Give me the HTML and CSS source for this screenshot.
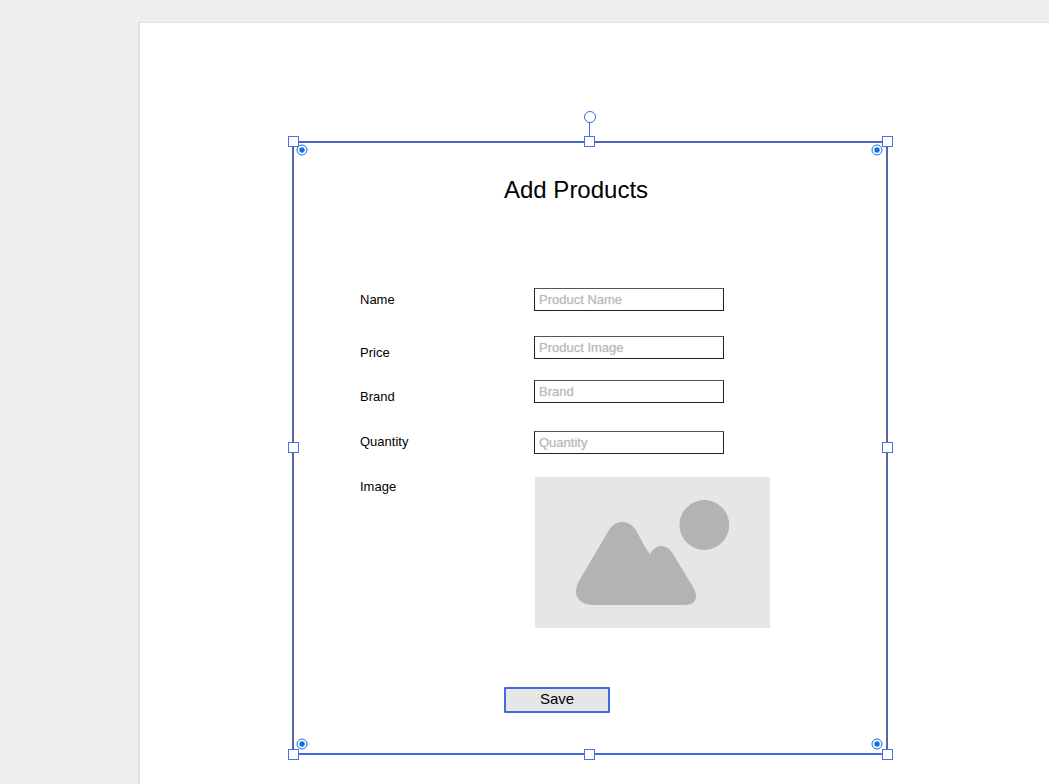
FILE: index.html
```html
<!DOCTYPE html>
<html lang="en">
<head>
<meta charset="utf-8">
<title>Add Products</title>
<link rel="stylesheet" href="styles.css">
</head>
<body>
<main class="page">
  <section class="frame">
    <h1 class="title">Add Products</h1>
    <form class="form">
      <div class="row row-name">
        <label for="name">Name</label>
        <input id="name" type="text" placeholder="Product Name">
      </div>
      <div class="row row-price">
        <label for="price">Price</label>
        <input id="price" type="text" placeholder="Product Image">
      </div>
      <div class="row row-brand">
        <label for="brand">Brand</label>
        <input id="brand" type="text" placeholder="Brand">
      </div>
      <div class="row row-quantity">
        <label for="quantity">Quantity</label>
        <input id="quantity" type="text" placeholder="Quantity">
      </div>
      <div class="row row-image">
        <span class="caption">Image</span>
        <svg class="picture" viewBox="0 0 235 151" role="img" aria-label="Image placeholder">
          <rect width="235" height="151" fill="#e6e6e6"/>
          <circle cx="169.300" cy="48" r="24.900" fill="#b3b3b3"/>
          <path fill="#b3b3b3" d="M74 53C79 46 83 45 87.500 45C93 45 98 48 102 55C106 63 110 70 114.700 77C118 72 122 69 126 69C130 69 134 71 138 77L158 110C160 113 161 116 161 120C161 125 156 128 150 128H58C49 128 41 123 41 115C41 111 42 108 44 104Z"/>
        </svg>
      </div>
      <button class="save" type="button">Save</button>
    </form>
    <i class="handle top left"></i>
    <i class="handle top center"></i>
    <i class="handle top right"></i>
    <i class="handle middle left"></i>
    <i class="handle middle right"></i>
    <i class="handle bottom left"></i>
    <i class="handle bottom center"></i>
    <i class="handle bottom right"></i>
    <i class="rotate"></i>
    <svg class="dot dot-top dot-left" viewBox="0 0 12 12"><circle cx="6" cy="6" r="5"/><circle class="core" cx="6" cy="6" r="2.700"/></svg>
    <svg class="dot dot-top dot-right" viewBox="0 0 12 12"><circle cx="6" cy="6" r="5"/><circle class="core" cx="6" cy="6" r="2.700"/></svg>
    <svg class="dot dot-bottom dot-left" viewBox="0 0 12 12"><circle cx="6" cy="6" r="5"/><circle class="core" cx="6" cy="6" r="2.700"/></svg>
    <svg class="dot dot-bottom dot-right" viewBox="0 0 12 12"><circle cx="6" cy="6" r="5"/><circle class="core" cx="6" cy="6" r="2.700"/></svg>
  </section>
</main>
</body>
</html>
```

FILE: styles.css
```css
* { box-sizing: border-box; }

body {
  display: flex;
  min-height: 100vh;
  margin: 0;
  padding: 22px 0 0 138px;
  background: #eee;
  color: #000;
  font-family: "Liberation Sans", Arial, sans-serif;
  font-size: 13px;
}

.page {
  flex: 1;
  padding: 118px 24px 28px 152px;
  border: solid #e0e0e0;
  border-width: 1px 0 0 2px;
  background: #fff;
}

.frame {
  position: relative;
  max-width: 596px;
  padding: 33px 66px 41px;
  border: 2px solid #5468a8;
  border-top-color: #4a66bc;
  border-bottom-color: #4169e1;
}

.title {
  margin: 0 0 84px;
  padding-left: 144px;
  font-size: 24px;
  font-weight: 400;
  line-height: 28px;
}

.row {
  display: grid;
  grid-template-columns: 174px 1fr;
  align-items: start;
}

.row label,
.caption { line-height: 20px; }

.row-name { height: 48px; }
.row-name label { padding-top: 2px; }
.row-price { height: 44px; }
.row-price label { padding-top: 7px; }
.row-brand { height: 51px; }
.row-brand label { padding-top: 7px; }
.row-quantity { height: 46px; }
.row-quantity label { padding-top: 1px; }

input {
  width: 190px;
  height: 23px;
  padding: 0 4px 1px;
  border: 1px solid #222;
  border-top-color: #555;
  background: #fff;
  font: inherit;
}

input::placeholder {
  color: #bbb;
  opacity: 1;
  text-shadow: 0 0 1px #ccc;
}

.picture {
  display: block;
  width: 235px;
  margin-left: 1px;
}

.save {
  display: block;
  width: 106px;
  height: 26px;
  margin: 59px 0 0 144px;
  padding: 0 0 3px;
  border: 2px solid #4169e1;
  border-radius: 1px;
  background: #e6e6e6;
  color: #000;
  font: inherit;
  font-size: 15px;
}

.form { margin-bottom: -1px; }

.handle {
  position: absolute;
  width: 11px;
  height: 11px;
  border: 1px solid #4a6ee8;
  background: #fff;
}

.top { top: -7px; }
.middle { top: calc(50% - 6px); }
.bottom { bottom: -7px; }
.left { left: -6px; }
.center { left: calc(50% - 6px); }
.right { right: -7px; }

.rotate {
  position: absolute;
  top: -32px;
  left: calc(50% - 6px);
  width: 12px;
  height: 12px;
  border: 1px solid #4169e1;
  border-radius: 50%;
}

.rotate::after {
  content: "";
  position: absolute;
  top: 10px;
  left: 4px;
  width: 1px;
  height: 15px;
  background: #4169e1;
}

.dot {
  position: absolute;
  width: 12px;
  height: 12px;
  fill: #fff;
  stroke: #0a74e6;
}

.dot .core {
  fill: #0a74e6;
  stroke: none;
}

.dot-top { top: 1px; }
.dot-bottom { bottom: 3px; }
.dot-left { left: 2px; }
.dot-right { right: 3px; }
```
